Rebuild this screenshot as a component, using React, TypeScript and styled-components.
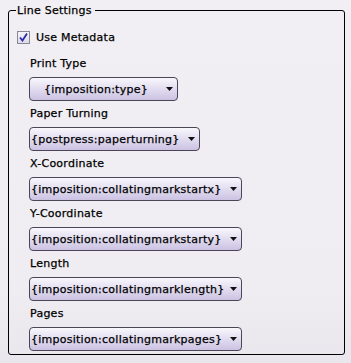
import React from "react";
import styled, { createGlobalStyle } from "styled-components";

const Global = createGlobalStyle`
  html, body {
    margin: 0;
    padding: 0;
    background: #ffffff;
  }
  body {
    font-family: "DejaVu Sans", Verdana, sans-serif;
    font-size: 11px;
    letter-spacing: 0.25px;
    color: #000;
  }
`;

const Page = styled.div`
  width: 351px;
  height: 363px;
  box-sizing: border-box;
  padding: 4px 6px 5px 8px;
  background: linear-gradient(180deg, #f1eff3 0%, #efedf1 80%, #e9e7ed 100%);
`;

const Group = styled.fieldset`
  margin: 0;
  padding: 14px 0 0 8px;
  height: 351px;
  box-sizing: border-box;
  border: 1px solid #000;
  border-radius: 3px;
`;

const Legend = styled.legend`
  padding: 0 3px 0 1px;
  margin-left: -1px;
  -webkit-text-stroke: 0.25px #000;
`;

const CheckRow = styled.label`
  display: flex;
  align-items: center;
  gap: 6px;
  margin-bottom: 13px;
  -webkit-text-stroke: 0.25px #000;
`;

const Box = styled.span`
  width: 11px;
  height: 11px;
  border: 1px solid #8a8898;
  background: linear-gradient(180deg, #f4f4f8, #dcdbe6);
  display: flex;
  align-items: center;
  justify-content: center;
`;

const Fields = styled.div`
  display: flex;
  flex-direction: column;
  padding-left: 12px;
`;

const Field = styled.div`
  display: flex;
  flex-direction: column;
  gap: 6px;
  height: 50px;
`;

const Label = styled.div`
  line-height: 14px;
  padding-left: 1px;
  -webkit-text-stroke: 0.25px #000;
`;

const Select = styled.div<{ $width: number }>`
  width: ${({ $width }) => $width}px;
  height: 24px;
  box-sizing: border-box;
  border: 1px solid #4a4658;
  border-radius: 4px;
  background: linear-gradient(180deg, #f8f7fc 0%, #e4dff1 45%, #cbc2e2 100%);
  display: flex;
  align-items: center;
  gap: 5px;
  padding: 0 4px 0 1px;
  -webkit-text-stroke: 0.25px #000;
`;

const Value = styled.span<{ $center?: boolean }>`
  flex: 1;
  text-align: ${({ $center }) => ($center ? "center" : "left")};
  white-space: nowrap;
`;

const Arrow = () => (
  <svg width="7" height="4" viewBox="0 0 7 4">
    <path d="M0 0h7L3.5 4z" fill="#111" />
  </svg>
);

const Check = () => (
  <svg width="9" height="9" viewBox="0 0 9 9">
    <path d="M1 4.5l2.5 3L8 0.5" stroke="#2a2ab0" strokeWidth="1.8" fill="none" />
  </svg>
);

const fields = [
  { label: "Print Type", value: "{imposition:type}", width: 149, center: true },
  { label: "Paper Turning", value: "{postpress:paperturning}", width: 171 },
  { label: "X-Coordinate", value: "{imposition:collatingmarkstartx}", width: 213 },
  { label: "Y-Coordinate", value: "{imposition:collatingmarkstarty}", width: 213 },
  { label: "Length", value: "{imposition:collatingmarklength}", width: 213 },
  { label: "Pages", value: "{imposition:collatingmarkpages}", width: 213 },
];

export default function App() {
  return (
    <>
      <Global />
      <Page>
        <Group>
          <Legend>Line Settings</Legend>
          <CheckRow>
            <Box>
              <Check />
            </Box>
            Use Metadata
          </CheckRow>
          <Fields>
            {fields.map((f) => (
              <Field key={f.label}>
                <Label>{f.label}</Label>
                <Select $width={f.width}>
                  <Value $center={f.center}>{f.value}</Value>
                  <Arrow />
                </Select>
              </Field>
            ))}
          </Fields>
        </Group>
      </Page>
    </>
  );
}
